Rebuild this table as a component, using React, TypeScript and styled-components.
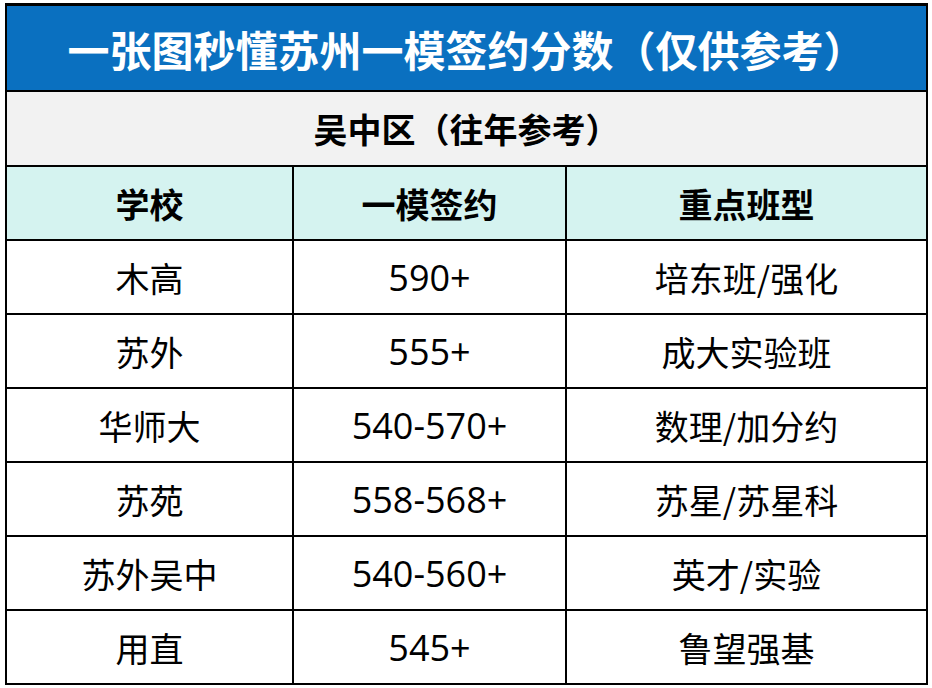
import React, { FC } from 'react';
import styled, { createGlobalStyle } from 'styled-components';

const GlobalStyle = createGlobalStyle`
  html, body {
    margin: 0;
    padding: 0;
    background: #ffffff;
  }
  body {
    font-family: "Noto Sans CJK SC", "Noto Sans", sans-serif;
    color: #000;
  }
`;

type School = {
  name: string;
  score: string;
  classes: string;
};

const schools: School[] = [
  { name: '木高', score: '590+', classes: '培东班/强化' },
  { name: '苏外', score: '555+', classes: '成大实验班' },
  { name: '华师大', score: '540-570+', classes: '数理/加分约' },
  { name: '苏苑', score: '558-568+', classes: '苏星/苏星科' },
  { name: '苏外吴中', score: '540-560+', classes: '英才/实验' },
  { name: '用直', score: '545+', classes: '鲁望强基' },
];

const headers = ['学校', '一模签约', '重点班型'];

const App: FC = () => (
  <>
    <GlobalStyle />
    <Page>
      <Table>
        <TitleBar>一张图秒懂苏州一模签约分数（仅供参考）</TitleBar>
        <SubTitle>吴中区（往年参考）</SubTitle>
        <Row $header>
          {headers.map((h) => (
            <Cell key={h} $bold>
              {h}
            </Cell>
          ))}
        </Row>
        {schools.map((s) => (
          <Row key={s.name}>
            <Cell>{s.name}</Cell>
            <Cell $numeric>{s.score}</Cell>
            <Cell>{s.classes}</Cell>
          </Row>
        ))}
      </Table>
    </Page>
  </>
);

export default App;

const Page = styled.div`
  padding: 3px 0 0 5px;
`;

const Table = styled.div`
  display: flex;
  width: 919px;
  flex-direction: column;
  border: 2px solid #000;
  border-top-width: 3px;
`;

const TitleBar = styled.div`
  display: flex;
  height: 84px;
  align-items: center;
  justify-content: center;
  background: #0a70c0;
  color: #fff;
  font-size: 42px;
  font-weight: 700;
`;

const SubTitle = styled.div`
  display: flex;
  height: 73px;
  align-items: center;
  justify-content: center;
  border-top: 2px solid #000;
  background: #f2f2f2;
  font-size: 34px;
  font-weight: 700;
`;

const Row = styled.div<{ $header?: boolean }>`
  display: grid;
  height: 72px;
  grid-template-columns: 285px 273px 361px;
  border-top: 2px solid #000;
  background: ${({ $header }) => ($header ? '#d5f3f0' : '#fff')};
`;

const Cell = styled.div<{ $bold?: boolean; $numeric?: boolean }>`
  display: flex;
  align-items: center;
  justify-content: center;
  font-family: ${({ $numeric }) =>
    $numeric ? '"Open Sans", "Noto Sans CJK SC", sans-serif' : 'inherit'};
  font-size: ${({ $numeric }) => ($numeric ? '36px' : '34px')};
  font-weight: ${({ $bold }) => ($bold ? 700 : 400)};

  & + & {
    border-left: 2px solid #000;
  }
`;
